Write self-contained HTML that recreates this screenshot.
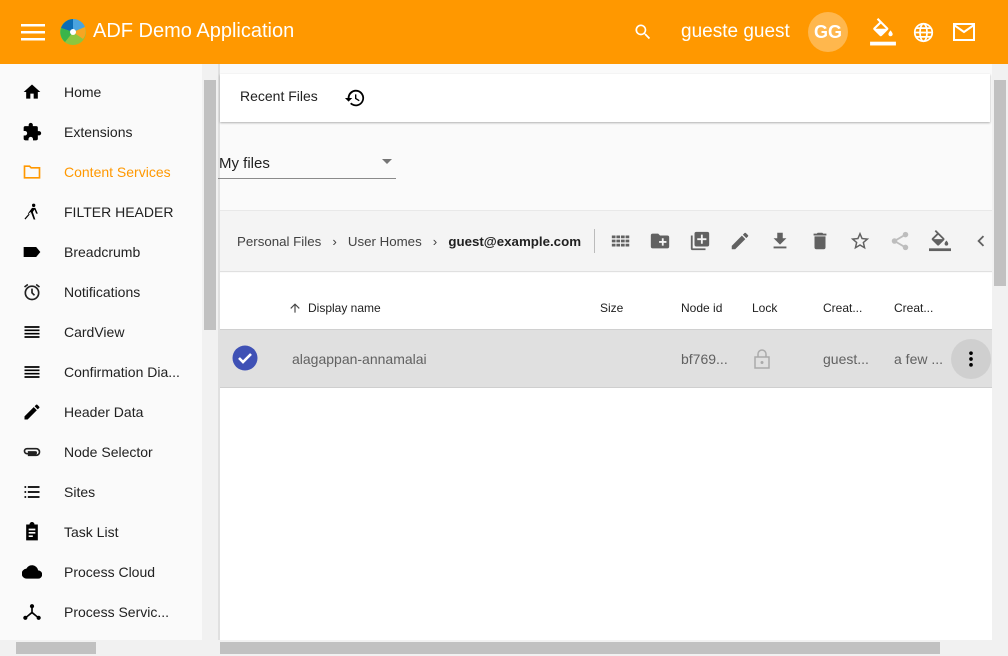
<!DOCTYPE html>
<html><head><meta charset="utf-8"><style>
*{box-sizing:border-box;margin:0;padding:0}
body{width:1008px;height:656px;overflow:hidden;font-family:"Liberation Sans",sans-serif;background:#fafafa;position:relative;color:#212121}
.abs{position:absolute}
#hdr{left:0;top:0;width:1008px;height:64px;background:#ff9800;color:#fff}
#side{left:0;top:64px;width:202px;height:576px;background:#fafafa}
.it{position:absolute;left:0;height:40px;width:202px;font-size:14px;display:flex;align-items:center}
.it svg{position:absolute;left:22px;width:20px;height:20px}
.it span{position:absolute;left:64px}
.sb{background:#f1f1f1}
.th{background:#c1c1c1}
.tb svg{position:absolute;top:230px;width:22px;height:22px;fill:#616161}
.col{position:absolute;top:301px;font-size:12px;color:#212121}
.cell{position:absolute;top:351px;font-size:14px;color:#616161}
</style></head><body>
<div id="hdr" class="abs">
 <svg class="abs" style="left:21px;top:21px" width="24" height="22" viewBox="0 0 24 22"><rect y="3" width="24" height="2.5" fill="#fff"/><rect y="10" width="24" height="2.5" fill="#fff"/><rect y="17" width="24" height="2.5" fill="#fff"/></svg>
 <svg class="abs" style="left:59px;top:18px" width="28" height="28" viewBox="0 0 28 28"><circle cx="14" cy="14" r="13" fill="#8cc63f"/><path d="M14 14L2 10A13 13 0 0 1 14 1Z" fill="#0b6cb4"/><path d="M14 14L14 1A13 13 0 0 1 26 9Z" fill="#4aa3df"/><path d="M14 14L26 9A13 13 0 0 1 24 21Z" fill="#f6a623"/><path d="M14 14L6 24A13 13 0 0 1 2 10Z" fill="#39b54a"/><circle cx="14" cy="14" r="3" fill="#fff"/></svg>
 <div class="abs" style="left:93px;top:20px;font-size:20px">ADF Demo Application</div>
 <svg class="abs" style="left:633px;top:22px" width="20" height="20" viewBox="0 0 24 24"><path fill="#fff" d="M15.5 14h-.8l-.3-.3A6.5 6.5 0 1 0 9.5 16a6.5 6.5 0 0 0 4.2-1.6l.3.3v.8l5 5 1.5-1.5-5-5zm-6 0A4.5 4.5 0 1 1 14 9.5 4.5 4.5 0 0 1 9.5 14z"/></svg>
 <div class="abs" style="left:681px;top:21px;font-size:19px">gueste guest</div>
 <div class="abs" style="left:808px;top:12px;width:40px;height:40px;border-radius:50%;background:#ffb74d;font-size:18px;font-weight:bold;text-align:center;line-height:40px">GG</div>
 <svg class="abs" style="left:870px;top:18px" width="26" height="28" viewBox="0 0 24 26"><path fill="#fff" d="M16.6 9 7.6 0 6.2 1.4l2.4 2.4-5.2 5.1a1.5 1.5 0 0 0 0 2.1l5.5 5.5a1.5 1.5 0 0 0 2.1 0l5.5-5.5a1.5 1.5 0 0 0 .1-2zM5.2 10 10 5.2 14.8 10zM19 11.5s-2 2.2-2 3.5a2 2 0 0 0 4 0c0-1.3-2-3.5-2-3.5z"/><rect y="22" width="24" height="3.5" fill="#fff"/></svg>
 <svg class="abs" style="left:913px;top:22px" width="21" height="21" viewBox="0 0 24 24"><circle cx="12" cy="12" r="10" fill="none" stroke="#fff" stroke-width="2"/><ellipse cx="12" cy="12" rx="4" ry="10" fill="none" stroke="#fff" stroke-width="2"/><path d="M2 12h20M4 7h16M4 17h16" stroke="#fff" stroke-width="2"/></svg>
 <svg class="abs" style="left:953px;top:23px" width="22" height="18" viewBox="0 0 22 18"><rect x="1" y="1" width="20" height="16" fill="none" stroke="#fff" stroke-width="2"/><path d="M1 2l10 7 10-7" fill="none" stroke="#fff" stroke-width="2"/></svg>
</div>
<div id="side" class="abs">
 <div class="it" style="top:8px"><svg viewBox="0 0 24 24"><path d="M10 20v-6h4v6h5v-8h3L12 3 2 12h3v8z"/></svg><span>Home</span></div>
 <div class="it" style="top:48px"><svg viewBox="0 0 24 24"><path d="M20.5 11H19V7a2 2 0 0 0-2-2h-4V3.5a2.5 2.5 0 0 0-5 0V5H4a2 2 0 0 0-2 2v3.8h1.5a2.7 2.7 0 0 1 0 5.4H2V20a2 2 0 0 0 2 2h3.8v-1.5a2.7 2.7 0 0 1 5.4 0V22H17a2 2 0 0 0 2-2v-4h1.5a2.5 2.5 0 0 0 0-5z"/></svg><span>Extensions</span></div>
 <div class="it" style="top:88px;color:#ff9800"><svg viewBox="0 0 24 24"><path fill="none" stroke="#ff9800" stroke-width="2" d="M3 5h6l2 2h10v12H3z"/></svg><span>Content Services</span></div>
 <div class="it" style="top:128px"><svg viewBox="0 0 24 24"><circle cx="14" cy="4" r="2"/><path d="M12 7l-5 7 2 1 2-2 3 8h2l-3-9 2-3 2 5h2l-3-7zM3 20l7-8 1 1-7 8z"/></svg><span>FILTER HEADER</span></div>
 <div class="it" style="top:168px"><svg viewBox="0 0 24 24"><path d="M2 6h15l5 6-5 6H2z"/></svg><span>Breadcrumb</span></div>
 <div class="it" style="top:208px"><svg viewBox="0 0 24 24"><circle cx="12" cy="13" r="8" fill="none" stroke="#212121" stroke-width="2"/><path d="M12 8v5l3 3M3 6l4-3M21 6l-4-3" stroke="#212121" stroke-width="2" fill="none"/></svg><span>Notifications</span></div>
 <div class="it" style="top:248px"><svg viewBox="0 0 24 24"><path d="M3 5h18v2H3zM3 9h18v2H3zM3 13h18v2H3zM3 17h18v2H3z"/></svg><span>CardView</span></div>
 <div class="it" style="top:288px"><svg viewBox="0 0 24 24"><path d="M3 5h18v2H3zM3 9h18v2H3zM3 13h18v2H3zM3 17h18v2H3z"/></svg><span>Confirmation Dia...</span></div>
 <div class="it" style="top:328px"><svg viewBox="0 0 24 24"><path d="M3 17.25V21h3.75L17.8 9.94l-3.75-3.75zM20.7 7.04a1 1 0 0 0 0-1.41l-2.34-2.34a1 1 0 0 0-1.41 0l-1.83 1.83 3.75 3.75z"/></svg><span>Header Data</span></div>
 <div class="it" style="top:368px"><svg viewBox="0 0 24 24"><path fill="none" stroke="#212121" stroke-width="2" d="M7 16h10a4 4 0 0 0 0-8H6a3 3 0 0 0 0 6h10a1 1 0 0 0 0-2H7"/></svg><span>Node Selector</span></div>
 <div class="it" style="top:408px"><svg viewBox="0 0 24 24"><path d="M3 5h2v2H3zM7 5h14v2H7zM3 11h2v2H3zM7 11h14v2H7zM3 17h2v2H3zM7 17h14v2H7z"/></svg><span>Sites</span></div>
 <div class="it" style="top:448px"><svg viewBox="0 0 24 24"><path d="M19 3h-4a3 3 0 0 0-6 0H5v19h14zM8 8h8v2H8zm0 4h8v2H8zm0 4h5v2H8z"/></svg><span>Task List</span></div>
 <div class="it" style="top:488px"><svg viewBox="0 0 24 24"><path d="M19.4 10A7.5 7.5 0 0 0 5.3 8 6 6 0 0 0 6 20h13a5 5 0 0 0 .4-10z"/></svg><span>Process Cloud</span></div>
 <div class="it" style="top:528px"><svg viewBox="0 0 24 24"><circle cx="12" cy="5" r="2.5"/><circle cx="4" cy="19" r="2.5"/><circle cx="20" cy="19" r="2.5"/><path d="M11 7h2v5l7 6-1 1.5-7-5.5-7 5.5L4 18l7-6z"/></svg><span>Process Servic...</span></div>
</div>
<div class="abs sb" style="left:202px;top:64px;width:16px;height:576px"></div>
<div class="abs th" style="left:204px;top:80px;width:12px;height:250px"></div>
<div class="abs" style="left:218px;top:64px;width:2px;height:576px;background:#e0e0e0"></div>
<div class="abs" style="left:220px;top:74px;width:770px;height:48px;background:#fff;box-shadow:0 1px 2px rgba(0,0,0,.3)"></div>
<div class="abs" style="left:240px;top:88px;font-size:14px">Recent Files</div>
<svg class="abs" style="left:344px;top:87px" width="22" height="22" viewBox="0 0 24 24"><path d="M13 3a9 9 0 0 0-9 9H1l4 4 4-4H6a7 7 0 1 1 2 5l-1.4 1.4A9 9 0 1 0 13 3zm-1 5v5l4.3 2.5.7-1.2-3.5-2.1V8z"/></svg>
<div class="abs" style="left:219px;top:155px;font-size:15px">My files</div>
<svg class="abs" style="left:381px;top:158px" width="12" height="8"><path d="M1 1h10L6 6z" fill="#757575"/></svg>
<div class="abs" style="left:218px;top:178px;width:178px;height:1px;background:#8a8a8a"></div>
<div class="abs" style="left:220px;top:210px;width:772px;height:62px;background:#f4f4f4;border-top:1px solid #e8e8e8;border-bottom:1px solid #e0e0e0"></div>
<div class="abs" style="left:237px;top:234px;font-size:13.3px;color:#424242">Personal Files&nbsp;&nbsp;&nbsp;›&nbsp;&nbsp;&nbsp;User Homes&nbsp;&nbsp;&nbsp;›&nbsp;&nbsp;&nbsp;<b style="color:#212121">guest@example.com</b></div>
<div class="abs" style="left:594px;top:229px;width:1px;height:24px;background:#bbb"></div>
<div class="tb">
<svg style="left:610px" viewBox="0 0 24 24"><path d="M2 6h4v3H2zm5 0h4v3H7zm5 0h4v3h-4zm5 0h4v3h-4zM2 10.5h4v3H2zm5 0h4v3H7zm5 0h4v3h-4zm5 0h4v3h-4zM2 15h4v3H2zm5 0h4v3H7zm5 0h4v3h-4zm5 0h4v3h-4z"/></svg>
<svg style="left:649px" viewBox="0 0 24 24"><path d="M20 6h-8l-2-2H4a2 2 0 0 0-2 2v12a2 2 0 0 0 2 2h16a2 2 0 0 0 2-2V8a2 2 0 0 0-2-2zm-1 8h-3v3h-2v-3h-3v-2h3V9h2v3h3z"/></svg>
<svg style="left:689px" viewBox="0 0 24 24"><path d="M4 6H2v14a2 2 0 0 0 2 2h14v-2H4zm16-4H8a2 2 0 0 0-2 2v12a2 2 0 0 0 2 2h12a2 2 0 0 0 2-2V4a2 2 0 0 0-2-2zm-1 9h-4v4h-2v-4H9V9h4V5h2v4h4z"/></svg>
<svg style="left:729px" viewBox="0 0 24 24"><path d="M3 17.25V21h3.75L17.8 9.94l-3.75-3.75zM20.7 7.04a1 1 0 0 0 0-1.41l-2.34-2.34a1 1 0 0 0-1.41 0l-1.83 1.83 3.75 3.75z"/></svg>
<svg style="left:769px" viewBox="0 0 24 24"><path d="M19 9h-4V3H9v6H5l7 7zM5 18v2h14v-2z"/></svg>
<svg style="left:809px" viewBox="0 0 24 24"><path d="M6 19a2 2 0 0 0 2 2h8a2 2 0 0 0 2-2V7H6zM19 4h-3.5l-1-1h-5l-1 1H5v2h14z"/></svg>
<svg style="left:849px" viewBox="0 0 24 24"><path d="M22 9.24l-7.19-.62L12 2 9.19 8.630 2 9.24l5.46 4.73L5.820 21 12 17.27 18.18 21l-1.63-7.03zM12 15.4l-3.76 2.27 1-4.28-3.32-2.88 4.38-.38L12 6.1l1.71 4.04 4.38.38-3.32 2.88 1 4.28z"/></svg>
<svg style="left:889px;fill:#bdbdbd" viewBox="0 0 24 24"><circle cx="18" cy="5" r="3"/><circle cx="6" cy="12" r="3"/><circle cx="18" cy="19" r="3"/><path d="M6 12l12-7M6 12l12 7" stroke="#bdbdbd" stroke-width="2"/></svg>
<svg style="left:929px" viewBox="0 0 24 24"><path d="M16.6 9 7.6 0 6.2 1.4l2.4 2.4-5.2 5.1a1.5 1.5 0 0 0 0 2.1l5.5 5.5a1.5 1.5 0 0 0 2.1 0l5.5-5.5a1.5 1.5 0 0 0 .1-2zM5.2 10 10 5.2 14.8 10zM19 11.5s-2 2.2-2 3.5a2 2 0 0 0 4 0c0-1.3-2-3.5-2-3.5z"/><rect y="20" width="24" height="3"/></svg>
<svg style="left:970px" viewBox="0 0 24 24"><path d="M15.4 7.4 14 6l-6 6 6 6 1.4-1.4L10.8 12z"/></svg>
</div>
<div class="abs" style="left:220px;top:273px;width:772px;height:57px;background:#fff;border-bottom:1px solid #d0d0d0"></div>
<svg class="abs" style="left:288px;top:301px" width="14" height="14" viewBox="0 0 24 24"><path d="M4 12l1.4 1.4L11 7.8V20h2V7.8l5.6 5.6L20 12l-8-8z" fill="#444"/></svg>
<div class="col" style="left:308px">Display name</div>
<div class="col" style="left:600px">Size</div>
<div class="col" style="left:681px">Node id</div>
<div class="col" style="left:752px">Lock</div>
<div class="col" style="left:823px">Creat...</div>
<div class="col" style="left:894px">Creat...</div>
<div class="abs" style="left:220px;top:330px;width:772px;height:58px;background:#e0e0e0;border-bottom:1px solid #cfcfcf"></div>
<div class="abs" style="left:220px;top:388px;width:772px;height:252px;background:#fff"></div>
<svg class="abs" style="left:232px;top:345px" width="26" height="26" viewBox="0 0 26 26"><circle cx="13" cy="13" r="12.5" fill="#3f51b5"/><path d="M7 13l4 4 8-8" stroke="#fff" stroke-width="2.6" fill="none"/></svg>
<div class="cell" style="left:292px">alagappan-annamalai</div>
<div class="cell" style="left:681px">bf769...</div>
<svg class="abs" style="left:753px;top:349px" width="18" height="20" viewBox="0 0 18 20"><rect x="2" y="8" width="14" height="11" fill="none" stroke="#aaa" stroke-width="1.5"/><path d="M5 8V5a4 4 0 0 1 8 0v3" fill="none" stroke="#aaa" stroke-width="1.5"/><circle cx="9" cy="13.5" r="1.5" fill="#aaa"/></svg>
<div class="cell" style="left:823px">guest...</div>
<div class="cell" style="left:894px">a few ...</div>
<div class="abs" style="left:951px;top:339px;width:40px;height:40px;border-radius:50%;background:#cfcfcf"></div>
<svg class="abs" style="left:961px;top:349px" width="20" height="20" viewBox="0 0 24 24"><circle cx="12" cy="5" r="2.2"/><circle cx="12" cy="12" r="2.2"/><circle cx="12" cy="19" r="2.2"/></svg>
<div class="abs sb" style="left:992px;top:64px;width:16px;height:576px"></div>
<div class="abs th" style="left:994px;top:80px;width:12px;height:206px"></div>
<div class="abs sb" style="left:0;top:640px;width:1008px;height:16px"></div>
<div class="abs th" style="left:16px;top:642px;width:80px;height:12px"></div>
<div class="abs th" style="left:220px;top:642px;width:720px;height:12px"></div>
</body></html>
